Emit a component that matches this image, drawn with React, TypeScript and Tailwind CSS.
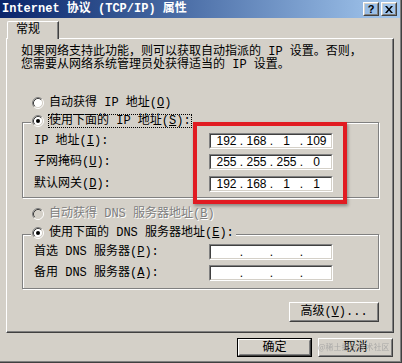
import { Fragment, ReactNode } from 'react'

// classic win2k / xp-classic dialog: Internet 协议 (TCP/IP) 属性

function Radio({ checked, disabled }: { checked?: boolean; disabled?: boolean }) {
  return (
    <svg width="12" height="12" viewBox="0 0 12 12" className="shrink-0">
      <circle cx="6" cy="6" r="4.5" fill={disabled ? '#d4d0c8' : '#ffffff'} />
      <path d="M2.11 9.89A5.5 5.5 0 0 1 9.89 2.11" fill="none" stroke="#808080" />
      <path d="M9.89 2.11A5.5 5.5 0 0 1 2.11 9.89" fill="none" stroke="#ffffff" />
      <path d="M2.82 9.18A4.5 4.5 0 0 1 9.18 2.82" fill="none" stroke="#404040" />
      <path d="M9.18 2.82A4.5 4.5 0 0 1 2.82 9.18" fill="none" stroke="#d4d0c8" />
      {checked && <circle cx="6" cy="6" r="2" fill={disabled ? '#808080' : '#000000'} />}
    </svg>
  )
}

function Bevel({ children }: { children: ReactNode }) {
  return (
    <div className="h-full border border-t-white border-l-white border-r-[#404040] border-b-[#404040]">
      <div className="h-full border border-t-[#d4d0c8] border-l-[#d4d0c8] border-r-[#808080] border-b-[#808080] flex items-center justify-center">
        {children}
      </div>
    </div>
  )
}

function IpBox({ parts }: { parts: string[] }) {
  return (
    <div className="w-[124px] h-[16px] border border-t-[#808080] border-l-[#808080] border-r-white border-b-white">
      <div className="h-full border border-t-[#404040] border-l-[#404040] border-r-[#d4d0c8] border-b-[#d4d0c8] bg-white flex items-center pl-[2px] leading-none font-['Liberation_Sans',sans-serif]">
        {parts.map((p, i) => (
          <Fragment key={i}>
            {i > 0 && <span className="w-[3px] flex justify-center">.</span>}
            <span className="w-[27px] text-center">{p}</span>
          </Fragment>
        ))}
      </div>
    </div>
  )
}

function Row({ label, parts, className }: { label: ReactNode; parts: string[]; className: string }) {
  return (
    <div className={`flex items-center h-[16px] pl-[11px] ${className}`}>
      <div className="w-[175px] whitespace-nowrap">{label}</div>
      <IpBox parts={parts} />
    </div>
  )
}

const GROUP = 'ml-[15px] w-[357px] border border-[#808080] shadow-[1px_1px_0_#fff,inset_1px_1px_0_#fff]'
const EMPTY = ['', '', '', '']

export default function App() {
  return (
    <div className="relative w-[402px] h-[363px] overflow-hidden bg-[#d4d0c8] text-black text-[12px] leading-[14px] font-['Liberation_Mono','Noto_Sans_CJK_SC',monospace]">
      <div className="h-full border-r border-b border-[#404040]">
        <div className="h-full border-r border-b border-[#808080] flex flex-col">
          {/* title bar */}
          <div className="h-[18px] shrink-0 flex items-center bg-linear-to-r from-[#0a246a] to-[#a6caf0] pl-[2px] pr-[3px]">
            <span className="font-bold text-white whitespace-nowrap">Internet 协议 (TCP/IP) 属性</span>
            <div className="ml-auto flex gap-[2px]">
              <div className="w-[16px] h-[14px]">
                <Bevel>
                  <span className="font-['Liberation_Sans',sans-serif] font-bold text-[11px] leading-none">?</span>
                </Bevel>
              </div>
              <div className="w-[16px] h-[14px]">
                <Bevel>
                  <svg width="8" height="7" viewBox="0 0 8 7">
                    <path d="M0 0h2l2 2.4L6 0h2L5 3.5 8 7H6L4 4.6 2 7H0l3-3.5z" fill="#000" />
                  </svg>
                </Bevel>
              </div>
            </div>
          </div>

          {/* tabs */}
          <div className="px-[6px] mt-[3px]">
            <div className="flex">
              <div className="relative z-10 ml-[1px] -mb-[1px] w-[52px] h-[18px] bg-[#d4d0c8] border-t border-l border-white border-r border-r-[#404040] shadow-[inset_-1px_0_0_#808080] rounded-tl-[2px] pl-[8px] pt-[1px]">
                常规
              </div>
            </div>

            <div className="h-[295px] border border-t-white border-l-white border-r-[#404040] border-b-[#404040] shadow-[inset_-1px_-1px_0_#808080] flex flex-col">
              <p className="ml-[14px] mt-[7px] leading-[13px] whitespace-nowrap">
                如果网络支持此功能，则可以获取自动指派的 IP 设置。否则，
                <br />
                您需要从网络系统管理员处获得适当的 IP 设置。
              </p>

              <div className="mt-[24px] ml-[25px] h-[14px] flex items-center gap-[5px]">
                <Radio />
                <span>自动获得 IP 地址(<u>O</u>)</span>
              </div>

              <div className={`mt-[12px] pb-[5px] ${GROUP}`}>
                <div className="-mt-[9px] ml-[8px] pl-[1px] pr-[1px] w-fit h-[14px] bg-[#d4d0c8] flex items-center gap-[4px]">
                  <Radio checked />
                  <span className="h-[14px] border border-dotted border-black leading-[12px] whitespace-nowrap">使用下面的 IP 地址(<u>S</u>):</span>
                </div>
                <Row className="mt-[5px]" label={<>IP 地址(<u>I</u>):</>} parts={['192', '168', '1', '109']} />
                <Row className="mt-[5px]" label={<>子网掩码(<u>U</u>):</>} parts={['255', '255', '255', '0']} />
                <Row className="mt-[6px]" label={<>默认网关(<u>D</u>):</>} parts={['192', '168', '1', '1']} />
              </div>

              <div className="mt-[9px] ml-[25px] h-[14px] flex items-center gap-[5px]">
                <Radio disabled />
                <span className="text-[#808080] [text-shadow:1px_1px_0_#fff]">自动获得 DNS 服务器地址(<u>B</u>)</span>
              </div>

              <div className={`mt-[13px] pb-[7px] ${GROUP}`}>
                <div className="-mt-[9px] ml-[8px] pl-[1px] pr-[2px] w-fit h-[14px] bg-[#d4d0c8] flex items-center gap-[5px]">
                  <Radio checked />
                  <span className="whitespace-nowrap">使用下面的 DNS 服务器地址(<u>E</u>):</span>
                </div>
                <Row className="mt-[4px]" label={<>首选 DNS 服务器(<u>P</u>):</>} parts={EMPTY} />
                <Row className="mt-[5px]" label={<>备用 DNS 服务器(<u>A</u>):</>} parts={EMPTY} />
              </div>

              <div className="mt-[13px] ml-[15px] w-[357px] flex justify-end">
                <div className="w-[90px] h-[20px]">
                  <Bevel>
                    <span>高级(<u>V</u>)...</span>
                  </Bevel>
                </div>
              </div>
            </div>
          </div>

          {/* dialog buttons */}
          <div className="mt-[5px] pr-[7px] flex justify-end gap-[6px]">
            <div className="w-[75px] h-[19px] border border-black">
              <Bevel>确定</Bevel>
            </div>
            <div className="w-[75px] h-[19px]">
              <Bevel>取消</Bevel>
            </div>
          </div>
        </div>
      </div>

      {/* annotation + watermark on top of the screenshot */}
      <div className="absolute left-[193px] top-[122px] w-[154px] h-[82px] border-4 border-[#e11b22] shadow-[1px_2px_3px_rgba(0,0,0,0.35)]" />
      <span className="absolute left-[318px] top-[341px] text-[8px] leading-[12px] text-[#a0a0a0] opacity-80 whitespace-nowrap font-['Noto_Sans_CJK_SC',sans-serif]">
        @稀土掘金技术社区
      </span>
    </div>
  )
}
